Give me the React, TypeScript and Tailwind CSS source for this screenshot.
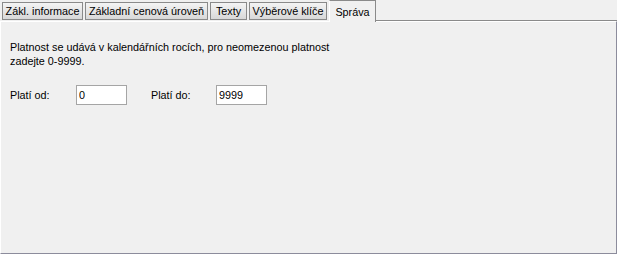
import React from 'react';

const tabs = ['Zákl. informace', 'Základní cenová úroveň', 'Texty', 'Výběrové klíče'];

const Tab = ({ label, w }: { label: string; w: string }) => (
  <div
    className={`${w} h-[18px] mt-[2px] mr-[2px] flex items-center justify-center border border-[#8a8a8a] bg-gradient-to-b from-[#f4f4f4] to-[#d8d8d8] text-black leading-none`}
  >
    {label}
  </div>
);

export default function App() {
  return (
    <div
      className="w-[617px] h-[254px] bg-[#f0f0f0] flex flex-col text-[10.8px] text-black"
      style={{ fontFamily: '"Liberation Sans", Arial, sans-serif' }}
    >
      <div className="flex h-[21px] pl-[2px] relative">
        <Tab label={tabs[0]} w="w-[81px]" />
        <Tab label={tabs[1]} w="w-[123px]" />
        <Tab label={tabs[2]} w="w-[37px]" />
        <Tab label={tabs[3]} w="w-[78px]" />
        <div className="w-[47px] h-[22px] z-10 flex items-start pt-[3px] justify-center border-l border-t border-r border-l-white border-t-[#8a8a8a] border-r-[#8a8a8a] bg-[#f0f0f0]">
          Správa
        </div>
        <div className="flex-1 self-end border-b border-[#8a8a8a]" />
      </div>
      <div className="flex-1 border-l border-t border-white border-r border-b border-r-[#8c8c9c] border-b-[#8c8c9c] pl-[9px] pt-[18px] leading-[14px]">
        <p>Platnost se udává v kalendářních rocích, pro neomezenou platnost</p>
        <p>zadejte 0-9999.</p>
        <div className="flex items-center mt-[17px]">
          <span className="w-[66px]">Platí od:</span>
          <input
            readOnly
            value="0"
            className="w-[51px] h-[20px] border border-[#a5a5a5] bg-white px-[2px] text-black outline-none"
          />
          <span className="w-[65px] ml-[24px]">Platí do:</span>
          <input
            readOnly
            value="9999"
            className="w-[51px] h-[20px] border border-[#a5a5a5] bg-white px-[2px] text-black outline-none"
          />
        </div>
      </div>
    </div>
  );
}
